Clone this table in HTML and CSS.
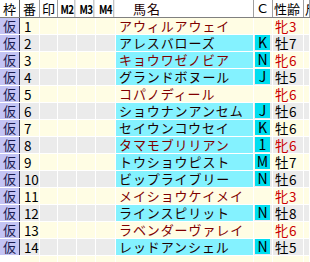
FILE: index.html
```html
<!DOCTYPE html>
<html lang="ja">
<head>
<meta charset="utf-8">
<link rel="stylesheet" href="styles.css">
</head>
<body>
<div class="grid">
  <div class="row head">
    <div class="c waku">枠</div>
    <div class="c ban">番</div>
    <div class="c shirushi">印</div>
    <div class="c m m2">M2</div>
    <div class="c m m3">M3</div>
    <div class="c m m4">M4</div>
    <div class="c name">馬名</div>
    <div class="c cc">C</div>
    <div class="c sex">性齢</div>
    <div class="c last">斤量</div>
  </div>

  <div class="row odd"><div class="c waku">仮</div><div class="c ban">1</div><div class="c shirushi"></div><div class="c m m2"></div><div class="c m m3"></div><div class="c m m4"></div><div class="c name f">アウィルアウェイ</div><div class="c cc"></div><div class="c sex f">牝3</div><div class="c last"></div></div>
  <div class="row even"><div class="c waku">仮</div><div class="c ban">2</div><div class="c shirushi"></div><div class="c m m2"></div><div class="c m m3"></div><div class="c m m4"></div><div class="c name hl">アレスバローズ</div><div class="c cc"><span class="badge">K</span></div><div class="c sex">牡7</div><div class="c last"></div></div>
  <div class="row odd"><div class="c waku">仮</div><div class="c ban">3</div><div class="c shirushi"></div><div class="c m m2"></div><div class="c m m3"></div><div class="c m m4"></div><div class="c name hl f">キョウワゼノビア</div><div class="c cc"><span class="badge">N</span></div><div class="c sex f">牝6</div><div class="c last"></div></div>
  <div class="row even"><div class="c waku">仮</div><div class="c ban">4</div><div class="c shirushi"></div><div class="c m m2"></div><div class="c m m3"></div><div class="c m m4"></div><div class="c name hl">グランドボヌール</div><div class="c cc"><span class="badge">J</span></div><div class="c sex">牡5</div><div class="c last"></div></div>
  <div class="row odd"><div class="c waku">仮</div><div class="c ban">5</div><div class="c shirushi"></div><div class="c m m2"></div><div class="c m m3"></div><div class="c m m4"></div><div class="c name f">コパノディール</div><div class="c cc"></div><div class="c sex f">牝6</div><div class="c last"></div></div>
  <div class="row even"><div class="c waku">仮</div><div class="c ban">6</div><div class="c shirushi"></div><div class="c m m2"></div><div class="c m m3"></div><div class="c m m4"></div><div class="c name hl">ショウナンアンセム</div><div class="c cc"><span class="badge">J</span></div><div class="c sex">牡6</div><div class="c last"></div></div>
  <div class="row odd"><div class="c waku">仮</div><div class="c ban">7</div><div class="c shirushi"></div><div class="c m m2"></div><div class="c m m3"></div><div class="c m m4"></div><div class="c name hl">セイウンコウセイ</div><div class="c cc"><span class="badge">K</span></div><div class="c sex">牡6</div><div class="c last"></div></div>
  <div class="row even"><div class="c waku">仮</div><div class="c ban">8</div><div class="c shirushi"></div><div class="c m m2"></div><div class="c m m3"></div><div class="c m m4"></div><div class="c name hl f">タマモブリリアン</div><div class="c cc"><span class="badge">1</span></div><div class="c sex f">牝6</div><div class="c last"></div></div>
  <div class="row odd"><div class="c waku">仮</div><div class="c ban">9</div><div class="c shirushi"></div><div class="c m m2"></div><div class="c m m3"></div><div class="c m m4"></div><div class="c name hl">トウショウピスト</div><div class="c cc"><span class="badge">M</span></div><div class="c sex">牡7</div><div class="c last"></div></div>
  <div class="row even"><div class="c waku">仮</div><div class="c ban">10</div><div class="c shirushi"></div><div class="c m m2"></div><div class="c m m3"></div><div class="c m m4"></div><div class="c name hl">ビップライブリー</div><div class="c cc"><span class="badge">N</span></div><div class="c sex">牡6</div><div class="c last"></div></div>
  <div class="row odd"><div class="c waku">仮</div><div class="c ban">11</div><div class="c shirushi"></div><div class="c m m2"></div><div class="c m m3"></div><div class="c m m4"></div><div class="c name f">メイショウケイメイ</div><div class="c cc"></div><div class="c sex f">牝3</div><div class="c last"></div></div>
  <div class="row even"><div class="c waku">仮</div><div class="c ban">12</div><div class="c shirushi"></div><div class="c m m2"></div><div class="c m m3"></div><div class="c m m4"></div><div class="c name hl">ラインスピリット</div><div class="c cc"><span class="badge">N</span></div><div class="c sex">牡8</div><div class="c last"></div></div>
  <div class="row odd"><div class="c waku">仮</div><div class="c ban">13</div><div class="c shirushi"></div><div class="c m m2"></div><div class="c m m3"></div><div class="c m m4"></div><div class="c name f">ラベンダーヴァレイ</div><div class="c cc"></div><div class="c sex f">牝6</div><div class="c last"></div></div>
  <div class="row even"><div class="c waku">仮</div><div class="c ban">14</div><div class="c shirushi"></div><div class="c m m2"></div><div class="c m m3"></div><div class="c m m4"></div><div class="c name hl">レッドアンシェル</div><div class="c cc"><span class="badge">N</span></div><div class="c sex">牡5</div><div class="c last"></div></div>
  <div class="row odd blank"><div class="c waku"></div><div class="c ban"></div><div class="c shirushi"></div><div class="c m m2"></div><div class="c m m3"></div><div class="c m m4"></div><div class="c name"></div><div class="c cc"></div><div class="c sex"></div><div class="c last"></div></div>
</div>
</body>
</html>
```

FILE: styles.css
```css
html, body {
  margin: 0;
  padding: 0;
  background: #ffffff;
  overflow: hidden;
}
body {
  width: 310px;
  height: 262px;
  font-family: "Noto Sans CJK JP", "DejaVu Sans", sans-serif;
  font-size: 13px;
  color: #000000;
}
.grid {
  display: flex;
  flex-direction: column;
  width: 310px;
  overflow: hidden;
}
.row {
  display: flex;
  height: 17px;
  box-sizing: border-box;
  border-bottom: 1px solid #ffffff;
  line-height: 16px;
}
.c {
  box-sizing: border-box;
  flex: none;
  border-right: 1px solid #ffffff;
  white-space: nowrap;
  height: 16px;
}
.waku { width: 20px; text-align: center; }
.ban { width: 20px; padding-left: 4px; font-size: 13.5px; letter-spacing: -0.3px; }
.shirushi { width: 18px; text-align: center; }
.m2 { width: 19px; }
.m3 { width: 19px; }
.m4 { width: 20px; }
.name { width: 138px; padding-left: 3px; letter-spacing: 0.9px; }
.cc { width: 19px; padding-left: 1px; }
.sex { width: 31px; padding-left: 2px; letter-spacing: 0.5px; font-size: 13.5px; }
.last { flex: 1 1 auto; min-width: 0; overflow: hidden; }

/* header */
.head {
  height: 18px;
  background: #ffffff;
  border-bottom: 1px solid #808080;
}
.head .c {
  height: 17px;
  line-height: 17px;
  border-right: 1px solid #a0a0a0;
}
.head .ban { font-size: 13px; padding-left: 3px; }
.head .m {
  font-size: 12px;
  font-weight: bold;
  letter-spacing: -0.5px;
  text-align: center;
  transform: scaleX(0.82);
}
.head .name { padding-left: 17px; }
.head .cc { padding-left: 4px; font-family: "DejaVu Sans", sans-serif; font-size: 13px; }
.head .sex { padding-left: 1px; letter-spacing: 0; font-size: 13px; }
.head .last { padding-left: 1px; }

/* body rows */
.odd { background: #fffde4; }
.even { background: #ebebeb; }
.row .waku {
  background: #c4c4f4;
  color: #1a1a50;
  border-right: 1px solid #303050;
}
.blank .waku { background: #ffffff; border-right-color: #ffffff; }
.head .waku { background: #ffffff; color: #000000; border-right: 1px solid #606060; }
.name { color: #1a0000; }
.name.f { color: #800000; }
.name.hl { background: #84f2ff; }
.sex.f { color: #cc0000; }
.badge {
  display: flex;
  align-items: center;
  justify-content: center;
  width: 15px;
  height: 15px;
  background: #00def0;
  font-size: 14px;
  line-height: 15px;
  letter-spacing: 0;
  color: #000000;
}
```
